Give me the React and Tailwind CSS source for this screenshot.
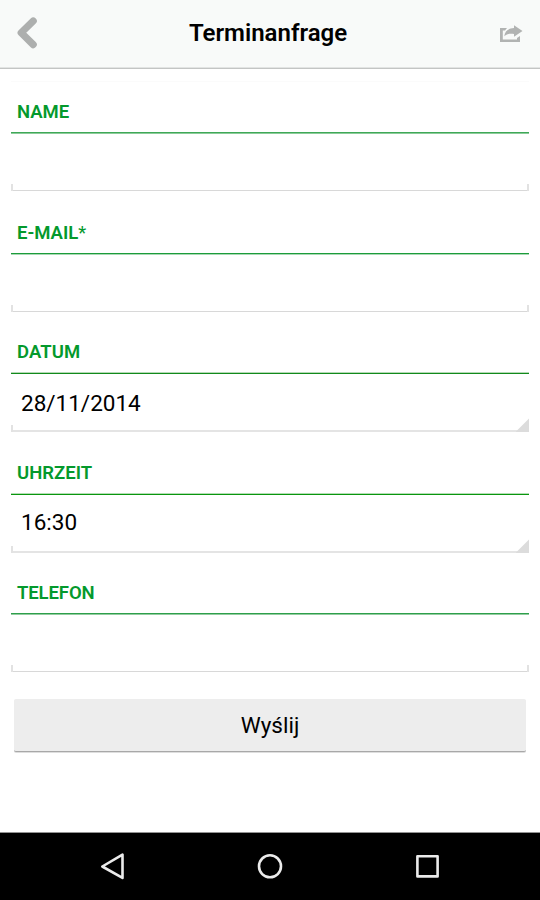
import React from "react";

const fields = [
  {
    label: "NAME",
    height: "h-[121px]",
    labelStyle: "pt-[15px]",
    line: "h-[2px] bg-linear-to-b from-[#3fa858] from-50% to-[#8ccb9a] to-50%",
  },
  {
    label: "E-MAIL",
    required: true,
    height: "h-[120px]",
    labelStyle: "pt-[15px]",
    line: "h-[2px] bg-linear-to-b from-[#1c9c3b] from-50% to-[#a9d9b4] to-50%",
  },
  {
    label: "DATUM",
    value: "28/11/2014",
    height: "h-[121px]",
    labelStyle: "pt-[14px] tracking-[0.1px]",
    valueStyle: "pt-[13px]",
    line: "h-[2px] -mt-px bg-linear-to-b from-[#b5d9b5] from-50% to-[#128a1c] to-50%",
    picker: true,
  },
  {
    label: "UHRZEIT",
    value: "16:30",
    height: "h-[119px]",
    labelStyle: "pt-[14px]",
    valueStyle: "pt-[11px]",
    line: "h-[2px] -mt-px bg-linear-to-b from-[#b5deb5] from-50% to-[#0a960e] to-50%",
    picker: true,
  },
  {
    label: "TELEFON",
    height: "h-[121px]",
    labelStyle: "pt-[15px] -tracking-[0.1px]",
    line: "h-[2px] bg-linear-to-b from-[#2e9f4b] from-50% to-[#93cca0] to-50%",
  },
];

const Header = () => (
  <header className="h-[69px] shrink-0 flex items-start justify-between bg-[#f8faf9] border-b border-[#c3c5c4] shadow-[inset_0_-1px_0_#e2e4e3]">
    <button className="w-[60px] h-[67px]" aria-label="Zurück">
      <svg width="60" height="67" viewBox="0 0 60 67" fill="none">
        <path d="M33.2 21L21.2 32.8L33.2 44.6" stroke="#adafae" strokeWidth="7.2" strokeLinecap="round" strokeLinejoin="round" />
      </svg>
    </button>
    <h1 className="h-[67px] leading-[67px] text-[24px] font-semibold text-black">
      Terminanfrage
    </h1>
    <button className="w-[64px] h-[67px]" aria-label="Teilen">
      <svg width="64" height="67" viewBox="476 0 64 67" fill="none">
        <path d="M507 28H500V42H520V36L517 38V39.5H502.8V30.5H505Z" fill="#b1b3b2" />
        <path d="M514 25.3L522.5 31L514 36.7V33.9C509.5 33.2 507 34 504.3 36.3C504.8 31.5 508 28.3 514 28.1Z" fill="#b1b3b2" />
      </svg>
    </button>
  </header>
);

const Field = ({ label, value, required, height, labelStyle, valueStyle, line, picker }) => (
  <div className={`${height} shrink-0 px-[11px]`}>
    <label className={`block h-[47px] pl-[6px] leading-6 text-[18.5px] font-semibold text-[#04992c] ${labelStyle}`}>
      {label}
      {required && <span className="font-normal">*</span>}
    </label>
    <div className={line} />
    <div className={picker ? "h-[58px] flex flex-col" : "h-[57px] flex flex-col"}>
      <div className={`flex-1 pl-[10px] leading-8 text-[22.5px] text-black ${valueStyle || ""}`}>
        {value}
      </div>
      {/* bottom bracket, date and time get a spinner corner */}
      <div className="-mt-[14px] h-[14px] flex items-end justify-between">
        <span className="w-[2px] h-[7px] bg-[#e2e2e2]" />
        <span className={picker ? "flex-1 h-[2px] bg-[#e4e4e4]" : "flex-1 h-px bg-[#d8d8d8]"} />
        {picker ? (
          <svg width="13" height="14" viewBox="0 0 13 14" className="-ml-[11px]">
            <path d="M13 0.5V14H0V13.5Z" fill="#dcdcdc" />
          </svg>
        ) : (
          <span className="w-[2px] h-[7px] bg-[#e2e2e2]" />
        )}
      </div>
    </div>
  </div>
);

const NavBar = () => (
  <nav className="h-[68px] shrink-0 bg-black border-t border-[#929292] flex justify-center">
    <svg width="540" height="67" viewBox="0 833 540 67" fill="none" stroke="#ebebeb" strokeWidth="2.6" strokeLinejoin="round">
      <path d="M102.3 866.5L122.5 854.7V877.9Z" />
      <circle cx="270" cy="866.3" r="11" />
      <rect x="417.4" y="856.2" width="20.2" height="20.2" />
    </svg>
  </nav>
);

const App = () => {
  return (
    <div className="w-[540px] h-[900px] flex flex-col bg-white overflow-hidden font-['Roboto',sans-serif]">
      <Header />
      <main className="flex-1 flex flex-col pt-3">
        <div className="h-px shrink-0 mx-[11px] mb-[3px] bg-[#fbfbfb]" />
        {fields.map((field) => (
          <Field key={field.label} {...field} />
        ))}
        <button className="mx-[14px] mt-3 h-[53px] pt-[2px] shrink-0 rounded-[2px] bg-[#ededed] border-b border-[#a8a8a8] shadow-[0_1px_0_#dedede] text-[22.5px] text-black">
          Wyślij
        </button>
      </main>
      <NavBar />
    </div>
  );
};

export default App;
